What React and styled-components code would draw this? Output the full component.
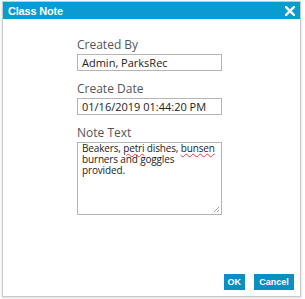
import React from "react";
import styled, { createGlobalStyle } from "styled-components";

const Global = createGlobalStyle`
    html, body {
        margin: 0;
        padding: 0;
        background: #ffffff;
    }
    body {
        font-family: "Open Sans", "Noto Sans", sans-serif;
    }
`;

const Page = styled.div`
    width: 305px;
    height: 299px;
    padding: 1px 4px 2px 2px;
    box-sizing: border-box;
    display: flex;
`;

const Dialog = styled.div`
    flex: 1;
    display: flex;
    flex-direction: column;
    border: 1px solid #c8c8c8;
    background: #ffffff;
    box-shadow: 0 1px 3px rgba(0, 0, 0, 0.15);
`;

const TitleBar = styled.div`
    height: 17px;
    background: #0a9bd0;
    display: flex;
    align-items: center;
    justify-content: space-between;
    padding: 0 5px 0 5px;
`;

const Title = styled.span`
    color: #ffffff;
    font-family: "Liberation Sans", Arial, sans-serif;
    font-weight: bold;
    font-size: 11px;
    letter-spacing: -0.2px;
`;

const CloseIcon = styled.svg`
    width: 10px;
    height: 10px;
`;

const Body = styled.div`
    flex: 1;
    display: flex;
    flex-direction: column;
    padding: 18px 0 0 74px;
`;

const Field = styled.div`
    display: flex;
    flex-direction: column;
    width: 145px;
    margin-bottom: 10px;
`;

const Label = styled.label`
    font-size: 12px;
    color: #555555;
    line-height: 15px;
    margin-bottom: 2px;
`;

const Input = styled.div`
    border: 1px solid #b5b5b5;
    height: 17px;
    box-sizing: border-box;
    font-size: 11px;
    color: #222222;
    padding: 0 4px;
    display: flex;
    align-items: center;
`;

const TextArea = styled.div`
    border: 1px solid #b5b5b5;
    height: 73px;
    box-sizing: border-box;
    font-size: 10px;
    letter-spacing: -0.15px;
    line-height: 11px;
    color: #222222;
    padding: 0 3px 2px 4px;
    position: relative;
`;

const Spell = styled.span`
    text-decoration: underline wavy #e04040;
    text-decoration-thickness: 1px;
    text-underline-offset: 1px;
`;

const Grip = styled.svg`
    position: absolute;
    right: 1px;
    bottom: 1px;
    width: 7px;
    height: 7px;
`;

const Footer = styled.div`
    display: flex;
    justify-content: flex-end;
    gap: 9px;
    padding: 0 6px 6px 0;
`;

const Button = styled.button`
    background: #0a8fc0;
    color: #ffffff;
    border: none;
    height: 16px;
    padding: 0 ${({ wide }) => (wide ? "5px" : "4px")};
    min-width: ${({ wide }) => (wide ? "40px" : "20px")};
    font-family: "Liberation Sans", Arial, sans-serif;
    font-weight: bold;
    font-size: 9px;
    cursor: pointer;
`;

export default function App() {
    return (
        <>
            <Global />
            <Page>
                <Dialog>
                    <TitleBar>
                        <Title>Class Note</Title>
                        <CloseIcon viewBox="0 0 10 10">
                            <path d="M1 1 L9 9 M9 1 L1 9" stroke="#ffffff" strokeWidth="2.4" strokeLinecap="square" />
                        </CloseIcon>
                    </TitleBar>
                    <Body>
                        <Field>
                            <Label>Created By</Label>
                            <Input>Admin, ParksRec</Input>
                        </Field>
                        <Field>
                            <Label>Create Date</Label>
                            <Input>01/16/2019 01:44:20 PM</Input>
                        </Field>
                        <Field>
                            <Label>Note Text</Label>
                            <TextArea>
                                Beakers, <Spell>petri</Spell> dishes, <Spell>bunsen</Spell> burners and goggles provided.
                                <Grip viewBox="0 0 7 7">
                                    <path d="M6 1 L1 6 M6 4 L4 6" stroke="#999" strokeWidth="1" />
                                </Grip>
                            </TextArea>
                        </Field>
                    </Body>
                    <Footer>
                        <Button>OK</Button>
                        <Button wide>Cancel</Button>
                    </Footer>
                </Dialog>
            </Page>
        </>
    );
}
